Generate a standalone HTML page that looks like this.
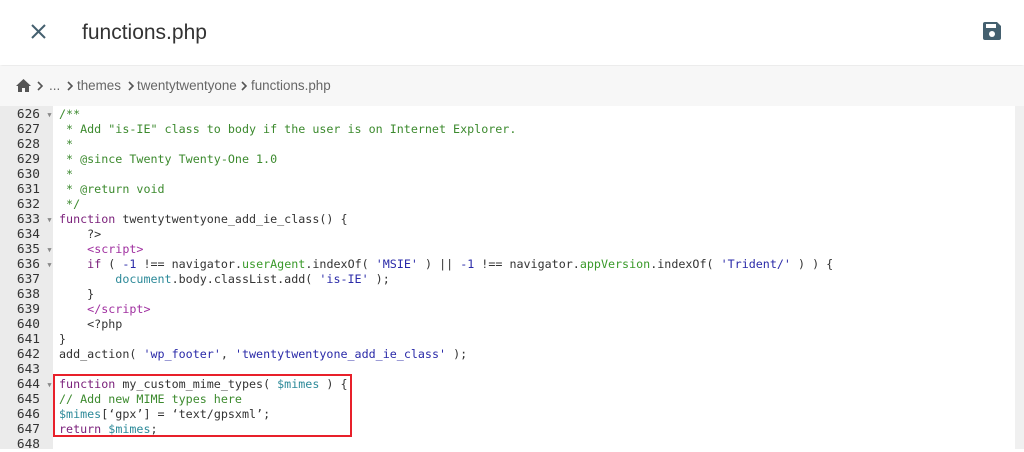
<!DOCTYPE html>
<html><head><meta charset="utf-8"><style>
*{margin:0;padding:0;box-sizing:border-box}
body{width:1024px;height:449px;overflow:hidden;background:#fff;font-family:"Liberation Sans",sans-serif;position:relative}
.hdr{position:absolute;left:0;top:0;width:1024px;height:65px;background:#fff;box-shadow:0 1px 3px rgba(0,0,0,.12)}
.title{position:absolute;left:82px;top:21px;font-size:21px;color:#333}
.bc{position:absolute;left:0;top:66px;width:1024px;height:40px;background:#f7f7f7;font-size:13.4px;color:#666}
.bc span{position:absolute;top:12px}
.bc svg.ch{position:absolute;top:15px}
.ed{position:absolute;left:0;top:106px;width:1024px;height:343px;background:#fff}
.gut{position:absolute;left:0;top:0;width:53px;height:343px;background:#ebebeb}
.sb{position:absolute;right:0;top:0;width:9px;height:343px;background:#f0f0f0}
.code{position:absolute;left:0;top:1px;font-family:"DejaVu Sans Mono",monospace;font-size:11.7px;line-height:15px;color:#333}
.l{height:15px;white-space:pre;position:relative}
.n{display:inline-block;width:40px;text-align:right;color:#333;font-size:12.8px}
.f{display:inline-block;width:19px;color:#888;font-size:7px;text-align:center;vertical-align:top;padding-top:1px}
.c{color:#3c8a2e}.k{color:#7a1f7a}.s{color:#2a2aa8}.v{color:#2d8a99}.p{color:#3a9a2a}.t{color:#a030a0}.num{color:#2a2aa8}
.box{position:absolute;left:53px;top:374px;width:299px;height:63px;border:2px solid #e8202a}
</style></head><body>
<div class="hdr">
<svg style="position:absolute;left:30px;top:23px" width="17" height="17" viewBox="0 0 17 17"><path d="M2 2L15 15M15 2L2 15" stroke="#44606f" stroke-width="2"/></svg>
<div class="title">functions.php</div>
<svg style="position:absolute;left:982px;top:21px" width="20" height="20" viewBox="0 0 20 20"><path d="M1 3a2 2 0 0 1 2-2h12l4 4v12a2 2 0 0 1-2 2H3a2 2 0 0 1-2-2z" fill="#44606f"/><rect x="4" y="3" width="10" height="4" fill="#fff"/><circle cx="10" cy="13" r="3" fill="#fff"/></svg>
</div>
<div class="bc">
<svg style="position:absolute;left:16px;top:13px" width="15" height="13" viewBox="0 0 15 13"><path d="M7.5 0L0 7h2v6h4V9h3v4h4V7h2z" fill="#555"/></svg>
<svg class="ch" style="left:37px" width="6" height="10" viewBox="0 0 6 10"><path d="M1 1l4 4-4 4" stroke="#555" stroke-width="1.6" fill="none"/></svg>
<span style="left:49px">...</span>
<svg class="ch" style="left:67px" width="6" height="10" viewBox="0 0 6 10"><path d="M1 1l4 4-4 4" stroke="#555" stroke-width="1.6" fill="none"/></svg>
<span style="left:77px">themes</span>
<svg class="ch" style="left:128px" width="6" height="10" viewBox="0 0 6 10"><path d="M1 1l4 4-4 4" stroke="#555" stroke-width="1.6" fill="none"/></svg>
<span style="left:137px">twentytwentyone</span>
<svg class="ch" style="left:241px" width="6" height="10" viewBox="0 0 6 10"><path d="M1 1l4 4-4 4" stroke="#555" stroke-width="1.6" fill="none"/></svg>
<span style="left:251px">functions.php</span>
</div>
<div class="ed"><div class="gut"></div><div class="sb"></div>
<div class="code">
<div class="l"><span class="n">626</span><span class="f">▼</span><span class="c">/**</span></div>
<div class="l"><span class="n">627</span><span class="f"></span><span class="c"> * Add "is-IE" class to body if the user is on Internet Explorer.</span></div>
<div class="l"><span class="n">628</span><span class="f"></span><span class="c"> *</span></div>
<div class="l"><span class="n">629</span><span class="f"></span><span class="c"> * @since Twenty Twenty-One 1.0</span></div>
<div class="l"><span class="n">630</span><span class="f"></span><span class="c"> *</span></div>
<div class="l"><span class="n">631</span><span class="f"></span><span class="c"> * @return void</span></div>
<div class="l"><span class="n">632</span><span class="f"></span><span class="c"> */</span></div>
<div class="l"><span class="n">633</span><span class="f">▼</span><span class="k">function</span> twentytwentyone_add_ie_class() {</div>
<div class="l"><span class="n">634</span><span class="f"></span>    ?&gt;</div>
<div class="l"><span class="n">635</span><span class="f">▼</span>    <span class="t">&lt;script&gt;</span></div>
<div class="l"><span class="n">636</span><span class="f">▼</span>    <span class="k">if</span> ( <span class="num">-1</span> !== navigator.<span class="p">userAgent</span>.indexOf( <span class="s">'MSIE'</span> ) || <span class="num">-1</span> !== navigator.<span class="p">appVersion</span>.indexOf( <span class="s">'Trident/'</span> ) ) {</div>
<div class="l"><span class="n">637</span><span class="f"></span>        <span class="v">document</span>.body.classList.add( <span class="s">'is-IE'</span> );</div>
<div class="l"><span class="n">638</span><span class="f"></span>    }</div>
<div class="l"><span class="n">639</span><span class="f"></span>    <span class="t">&lt;/script&gt;</span></div>
<div class="l"><span class="n">640</span><span class="f"></span>    &lt;?php</div>
<div class="l"><span class="n">641</span><span class="f"></span>}</div>
<div class="l"><span class="n">642</span><span class="f"></span>add_action( <span class="s">'wp_footer'</span>, <span class="s">'twentytwentyone_add_ie_class'</span> );</div>
<div class="l"><span class="n">643</span><span class="f"></span></div>
<div class="l"><span class="n">644</span><span class="f">▼</span><span class="k">function</span> my_custom_mime_types( <span class="v">$mimes</span> ) {</div>
<div class="l"><span class="n">645</span><span class="f"></span><span class="c">// Add new MIME types here</span></div>
<div class="l"><span class="n">646</span><span class="f"></span><span class="v">$mimes</span>[‘gpx’] = ‘text/gpsxml’;</div>
<div class="l"><span class="n">647</span><span class="f"></span><span class="k">return</span> <span class="v">$mimes</span>;</div>
<div class="l"><span class="n">648</span><span class="f"></span></div>
</div></div>
<div class="box"></div>
</body></html>
